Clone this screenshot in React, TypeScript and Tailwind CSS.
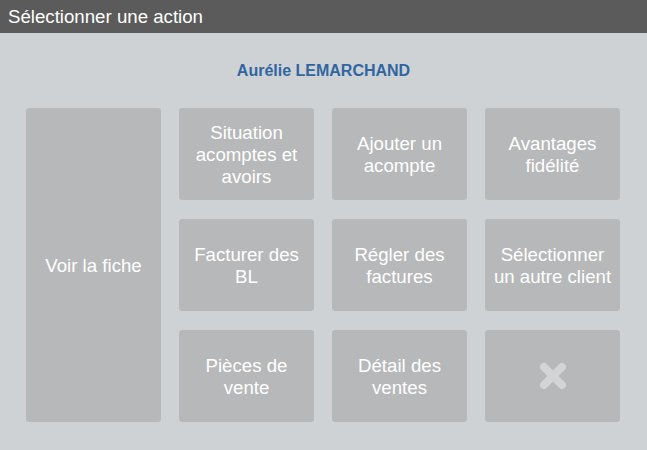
import React from "react";

const Tile = ({ children, className = "" }: { children: React.ReactNode; className?: string }) => (
  <div
    className={`flex items-center justify-center rounded-[3px] bg-[#b7b8b9] pt-[2px] text-center text-[18.67px] leading-[22px] text-white ${className}`}
  >
    {children}
  </div>
);

export default function App() {
  return (
    <div
      className="flex h-[450px] w-[647px] flex-col bg-[#cfd2d5]"
      style={{ fontFamily: '"Liberation Sans", Arial, sans-serif' }}
    >
      <div className="flex h-[33px] items-center bg-[#5b5b5b] pl-[8px] text-[18.67px] text-white">
        Sélectionner une action
      </div>
      <div className="flex h-[75px] items-center justify-center pt-[1px] text-[16px] font-bold text-[#2f66a1]">
        Aurélie LEMARCHAND
      </div>
      <div className="ml-[26px] grid w-[594px] grid-cols-[repeat(4,135px)] grid-rows-[repeat(3,92px)] gap-x-[18px] gap-y-[19px]">
        <Tile className="row-span-3">Voir la fiche</Tile>
        <Tile>
          Situation
          <br />
          acomptes et
          <br />
          avoirs
        </Tile>
        <Tile>
          Ajouter un
          <br />
          acompte
        </Tile>
        <Tile>
          Avantages
          <br />
          fidélité
        </Tile>
        <Tile>
          Facturer des
          <br />
          BL
        </Tile>
        <Tile>
          Régler des
          <br />
          factures
        </Tile>
        <Tile>
          Sélectionner
          <br />
          un autre client
        </Tile>
        <Tile>
          Pièces de
          <br />
          vente
        </Tile>
        <Tile>
          Détail des
          <br />
          ventes
        </Tile>
        <Tile className="!pt-0">
          <svg width="32" height="32" viewBox="0 0 32 32">
            <path
              d="M7 7 L25 25 M25 7 L7 25"
              stroke="#d2d4d6"
              strokeWidth="8"
              strokeLinecap="round"
            />
          </svg>
        </Tile>
      </div>
    </div>
  );
}
